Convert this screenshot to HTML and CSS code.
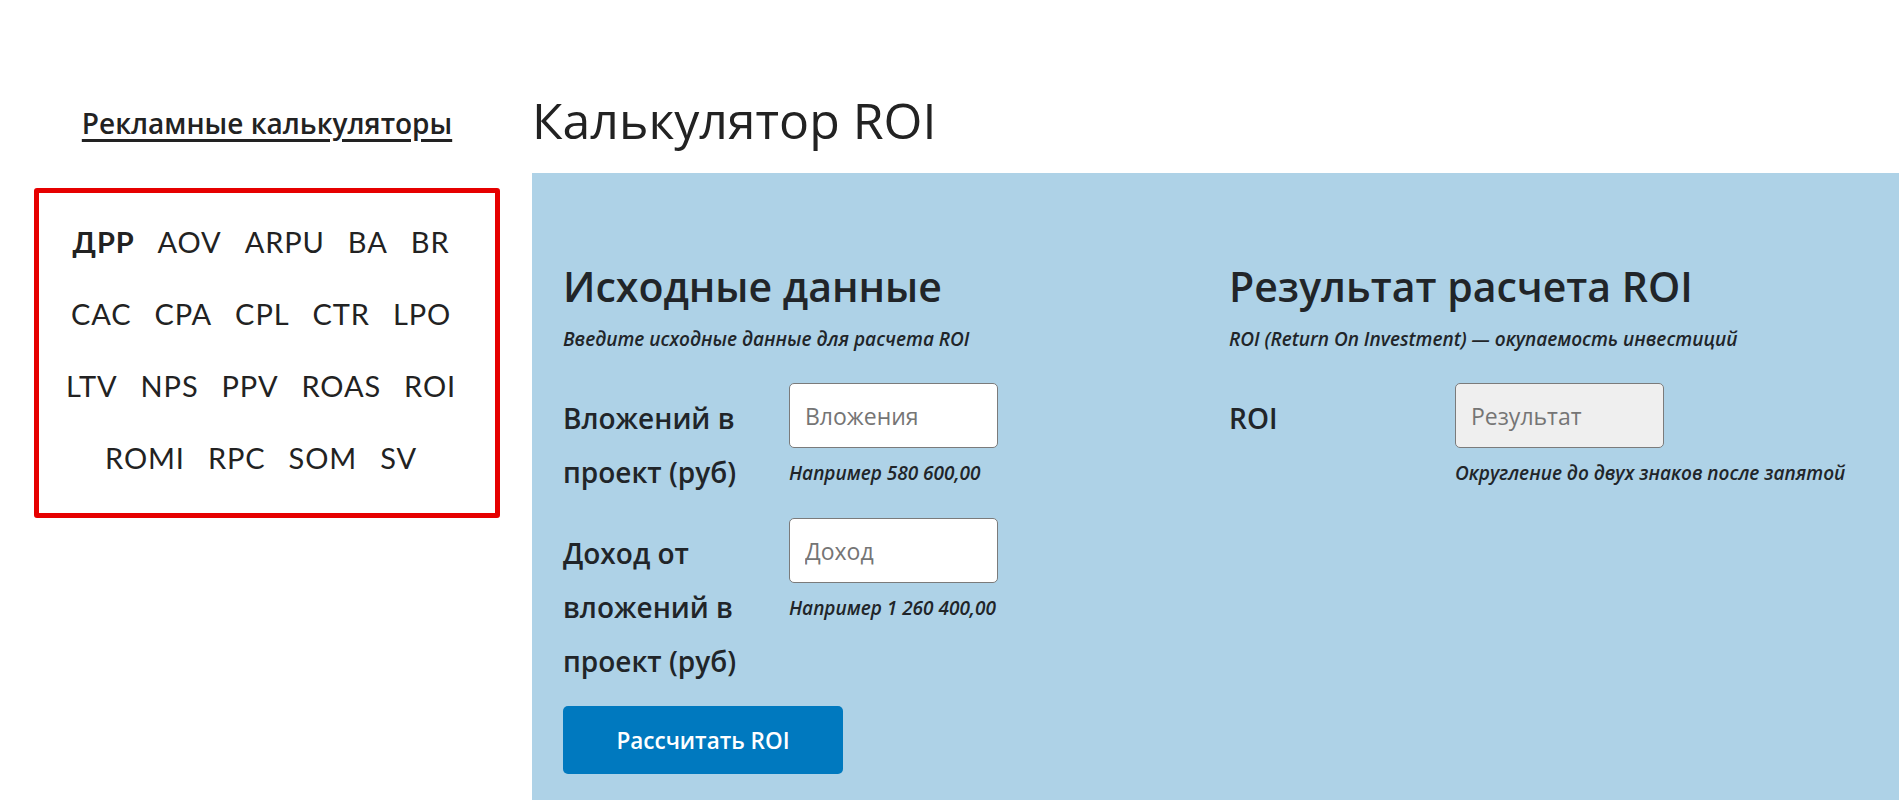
FILE: index.html
```html
<!DOCTYPE html>
<html lang="ru">
<head>
    <meta charset="UTF-8">
    <meta name="viewport" content="width=device-width, initial-scale=1.0">
    <title>Калькулятор ROI</title>
    <link rel="stylesheet" href="styles.css">
</head>
<body>
    <div class="page">
        <aside class="sidebar">
            <h3 class="sidebar-title"><a href="#">Рекламные калькуляторы</a></h3>
            <nav class="calc-list">
                <a class="calc-link strong" href="#">ДРР</a>
                <a class="calc-link" href="#">AOV</a>
                <a class="calc-link" href="#">ARPU</a>
                <a class="calc-link" href="#">BA</a>
                <a class="calc-link" href="#">BR</a>
                <a class="calc-link" href="#">CAC</a>
                <a class="calc-link" href="#">CPA</a>
                <a class="calc-link" href="#">CPL</a>
                <a class="calc-link" href="#">CTR</a>
                <a class="calc-link" href="#">LPO</a>
                <a class="calc-link" href="#">LTV</a>
                <a class="calc-link" href="#">NPS</a>
                <a class="calc-link" href="#">PPV</a>
                <a class="calc-link" href="#">ROAS</a>
                <a class="calc-link" href="#">ROI</a>
                <a class="calc-link" href="#">ROMI</a>
                <a class="calc-link" href="#">RPC</a>
                <a class="calc-link" href="#">SOM</a>
                <a class="calc-link" href="#">SV</a>
            </nav>
        </aside>

        <main class="content">
            <h1>Калькулятор ROI</h1>

            <section class="calc-panel">
                <div class="calc-col">
                    <h2>Исходные данные</h2>
                    <p class="note">Введите исходные данные для расчета ROI</p>

                    <div class="form-row">
                        <label for="invest">Вложений в проект (руб)</label>
                        <div class="field">
                            <input id="invest" type="text" placeholder="Вложения">
                            <p class="hint">Например 580 600,00</p>
                        </div>
                    </div>

                    <div class="form-row">
                        <label for="income">Доход от вложений в проект (руб)</label>
                        <div class="field">
                            <input id="income" type="text" placeholder="Доход">
                            <p class="hint">Например 1 260 400,00</p>
                        </div>
                    </div>

                    <button class="btn" type="button" onclick="calcRoi()">Рассчитать ROI</button>
                </div>

                <div class="calc-col">
                    <h2>Результат расчета ROI</h2>
                    <p class="note">ROI (Return On Investment) — окупаемость инвестиций</p>

                    <div class="form-row">
                        <label for="result">ROI</label>
                        <div class="field">
                            <input id="result" class="readonly" type="text" placeholder="Результат" readonly>
                            <p class="hint">Округление до двух знаков после запятой</p>
                        </div>
                    </div>
                </div>
            </section>
        </main>
    </div>

    <script>
        // расчет ROI
        function calcRoi() {
            const invest = parseFloat(document.getElementById('invest').value.replace(/\s/g, '').replace(',', '.'));
            const income = parseFloat(document.getElementById('income').value.replace(/\s/g, '').replace(',', '.'));
            const result = document.getElementById('result');

            if (!invest || isNaN(income)) {
                result.value = '';
                return;
            }

            result.value = ((income - invest) / invest * 100).toFixed(2) + ' %';
        }
    </script>
</body>
</html>
```

FILE: styles.css
```css
:root {
    --text-color: #222222;
    --panel-text: #212529;
    --panel-bg: #aed2e7;
    --accent-red: #e60000;
    --button-bg: #0079bf;
    --white: #ffffff;
}

* {
    margin: 0;
    padding: 0;
    box-sizing: border-box;
}

body {
    font-family: 'Open Sans', 'Noto Sans', sans-serif;
    color: var(--text-color);
    background-color: var(--white);
}

.page {
    display: flex;
    align-items: flex-start;
    padding-top: 90px;
}

/* боковая колонка */
.sidebar {
    width: 466px;
    margin-left: 34px;
    margin-right: 32px;
    flex-shrink: 0;
}

.sidebar-title {
    margin-top: 14px;
    text-align: center;
    font-size: 28px;
    font-weight: 600;
    line-height: 39px;
}

.sidebar-title a {
    color: var(--text-color);
    text-decoration: underline;
    text-decoration-thickness: 3px;
    text-underline-offset: 5px;
}

.calc-list {
    margin-top: 45px;
    border: 5px solid var(--accent-red);
    border-radius: 3px;
    padding: 13px 30px 19px 18px;
    display: flex;
    flex-wrap: wrap;
    justify-content: center;
    column-gap: 23px;
}

.calc-link {
    font-family: 'Lato', sans-serif;
    font-size: 29px;
    letter-spacing: 0.9px;
    line-height: 72px;
    color: var(--text-color);
    text-decoration: none;
}

.calc-link.strong {
    font-weight: 700;
}

/* основная колонка */
.content {
    flex: 1;
}

.content h1 {
    font-size: 50px;
    font-weight: 400;
    line-height: 1.2;
    color: var(--text-color);
    margin-bottom: 23px;
}

.calc-panel {
    background-color: var(--panel-bg);
    color: var(--panel-text);
    padding: 88px 4px 26px 31px;
    display: grid;
    grid-template-columns: 1fr 1fr;
}

.calc-col h2 {
    font-size: 41px;
    font-weight: 600;
    line-height: 1.25;
}

.note {
    margin-top: 14px;
    font-size: 19px;
    font-style: italic;
    font-weight: 600;
    line-height: 27px;
}

.form-row {
    display: grid;
    grid-template-columns: 226px 209px;
    margin-top: 30px;
}

.form-row + .form-row {
    margin-top: 19px;
}

.form-row label {
    padding-top: 8px;
    padding-right: 20px;
    font-size: 28px;
    font-weight: 600;
    line-height: 54px;
}

.field input {
    display: block;
    width: 209px;
    height: 65px;
    padding: 0 15px;
    font-family: inherit;
    font-size: 23px;
    color: var(--panel-text);
    background-color: var(--white);
    border: 1px solid #7b7b7b;
    border-radius: 5px;
}

.field input::placeholder {
    color: #757575;
}

.field input.readonly {
    background-color: #efefef;
}

.hint {
    margin-top: 12px;
    font-size: 19px;
    font-style: italic;
    font-weight: 600;
    line-height: 27px;
    white-space: nowrap;
}

.btn {
    display: block;
    width: 280px;
    height: 68px;
    margin-top: 18px;
    font-family: inherit;
    font-size: 22.5px;
    font-weight: 600;
    color: var(--white);
    background-color: var(--button-bg);
    border: none;
    border-radius: 5px;
    cursor: pointer;
}
```
